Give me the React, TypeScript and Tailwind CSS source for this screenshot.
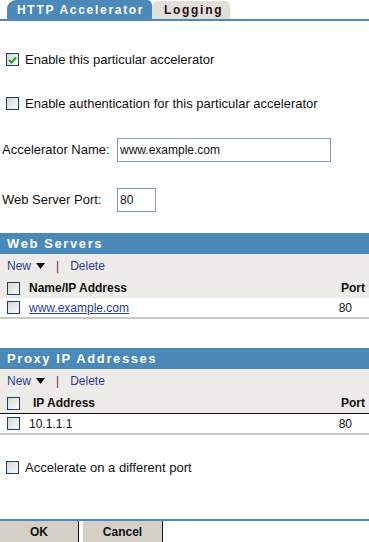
import React from 'react';

const Box: React.FC<{ checked?: boolean }> = ({ checked }) => (
  <span className="inline-flex h-[13px] w-[13px] shrink-0 items-center justify-center border border-[#1c3f6e] bg-gradient-to-br from-[#d8d8d0] to-[#fbfbf9]">
    {checked && (
      <svg width="9" height="8" viewBox="0 0 9 8">
        <path d="M1 4 L3.5 6.5 L8 1.5" stroke="#21a121" strokeWidth="2" fill="none" />
      </svg>
    )}
  </span>
);

const Toolbar: React.FC = () => (
  <div className="flex h-[24px] items-center pl-[7px] text-[12px] text-[#2b3a94]">
    <span>New</span>
    <svg className="ml-[5px]" width="9" height="6" viewBox="0 0 9 6">
      <path d="M0 0 H9 L4.5 6 Z" fill="#111" />
    </svg>
    <span className="ml-[11px] text-[#6b1a5c]">|</span>
    <span className="ml-[11px]">Delete</span>
  </div>
);

interface Section {
  title: string;
  column: string;
  colIndent: string;
  value: string;
  isLink?: boolean;
  headerBorder: string;
}

const TableSection: React.FC<{ s: Section; className: string }> = ({ s, className }) => (
  <div className={className}>
    <div className="flex h-[21px] items-center bg-[#4a89ba] pl-[7px] text-[13px] font-bold tracking-[1.6px] text-white">
      {s.title}
    </div>
    <div className="bg-[#eeece8]">
      <Toolbar />
      <div className={`flex h-[20px] items-center pl-[7px] pr-[4px] text-[12px] font-bold text-[#111] ${s.headerBorder}`}>
        <Box />
        <span className={s.colIndent}>{s.column}</span>
        <span className="ml-auto">Port</span>
      </div>
    </div>
    <div className="flex h-[21px] items-center border-b-2 border-[#c8c8c8] pl-[7px] text-[12px] text-[#111]">
      <Box />
      {s.isLink ? (
        <span className="ml-[9px] text-[#1f3d9e] underline">{s.value}</span>
      ) : (
        <span className="ml-[9px]">{s.value}</span>
      )}
      <span className="ml-auto mr-[17px]">80</span>
    </div>
  </div>
);

export default function App() {
  return (
    <div className="flex h-[542px] w-[369px] flex-col overflow-hidden bg-white font-['Liberation_Sans',Arial,sans-serif] text-[12px] text-[#111]">
      <div className="flex h-[21px] items-end border-b-2 border-[#4a89ba] pl-[7px]">
        <div className="flex h-[19px] w-[145px] items-center rounded-tl-[9px] rounded-tr-[5px] bg-[#4a89ba] pl-[10px] text-[12px] font-bold tracking-[1.7px] text-white">
          HTTP Accelerator
        </div>
        <div className="flex h-[18px] w-[78px] items-center rounded-tl-[6px] rounded-tr-[5px] bg-[#e2dfd9] pl-[12px] text-[12px] font-bold tracking-[1.7px] text-[#2a0a14]">
          Logging
        </div>
      </div>

      <label className="ml-[6px] mt-[32px] flex h-[13px] items-center gap-[6px] text-[13px]">
        <Box checked />
        <span>Enable this particular accelerator</span>
      </label>

      <label className="ml-[6px] mt-[31px] flex h-[13px] items-center gap-[6px] text-[13px]">
        <Box />
        <span>Enable authentication for this particular accelerator</span>
      </label>

      <div className="mt-[28px] flex h-[24px] items-center text-[13px]">
        <span className="ml-[2px] w-[115px]">Accelerator Name:</span>
        <div className="flex h-[24px] w-[214px] items-center border border-[#7f9db9] pl-[2px] text-[12px]">
          www.example.com
        </div>
      </div>

      <div className="mt-[26px] flex h-[24px] items-center text-[13px]">
        <span className="ml-[2px] w-[115px]">Web Server Port:</span>
        <div className="flex h-[24px] w-[39px] items-center border border-[#7f9db9] pl-[2px] text-[12px]">
          80
        </div>
      </div>

      <TableSection
        className="mt-[21px]"
        s={{ title: 'Web Servers', column: 'Name/IP Address', colIndent: 'ml-[9px]', value: 'www.example.com', isLink: true, headerBorder: '' }}
      />

      <TableSection
        className="mt-[29px]"
        s={{ title: 'Proxy IP Addresses', column: 'IP Address', colIndent: 'ml-[13px]', value: '10.1.1.1', headerBorder: 'border-b border-[#111] h-[21px]' }}
      />

      <label className="ml-[6px] mt-[26px] flex h-[13px] items-center gap-[6px] text-[13px]">
        <Box />
        <span>Accelerate on a different port</span>
      </label>

      <div className="flex-1" />

      <div className="flex h-[23px] border-t-2 border-[#4a89ba] text-[12px] font-bold">
        <button className="h-full w-[79px] border-r border-[#111] bg-[#d4d0c8]">OK</button>
        <button className="ml-[4px] h-full w-[80px] border-r border-[#111] bg-[#d4d0c8]">Cancel</button>
      </div>
    </div>
  );
}
